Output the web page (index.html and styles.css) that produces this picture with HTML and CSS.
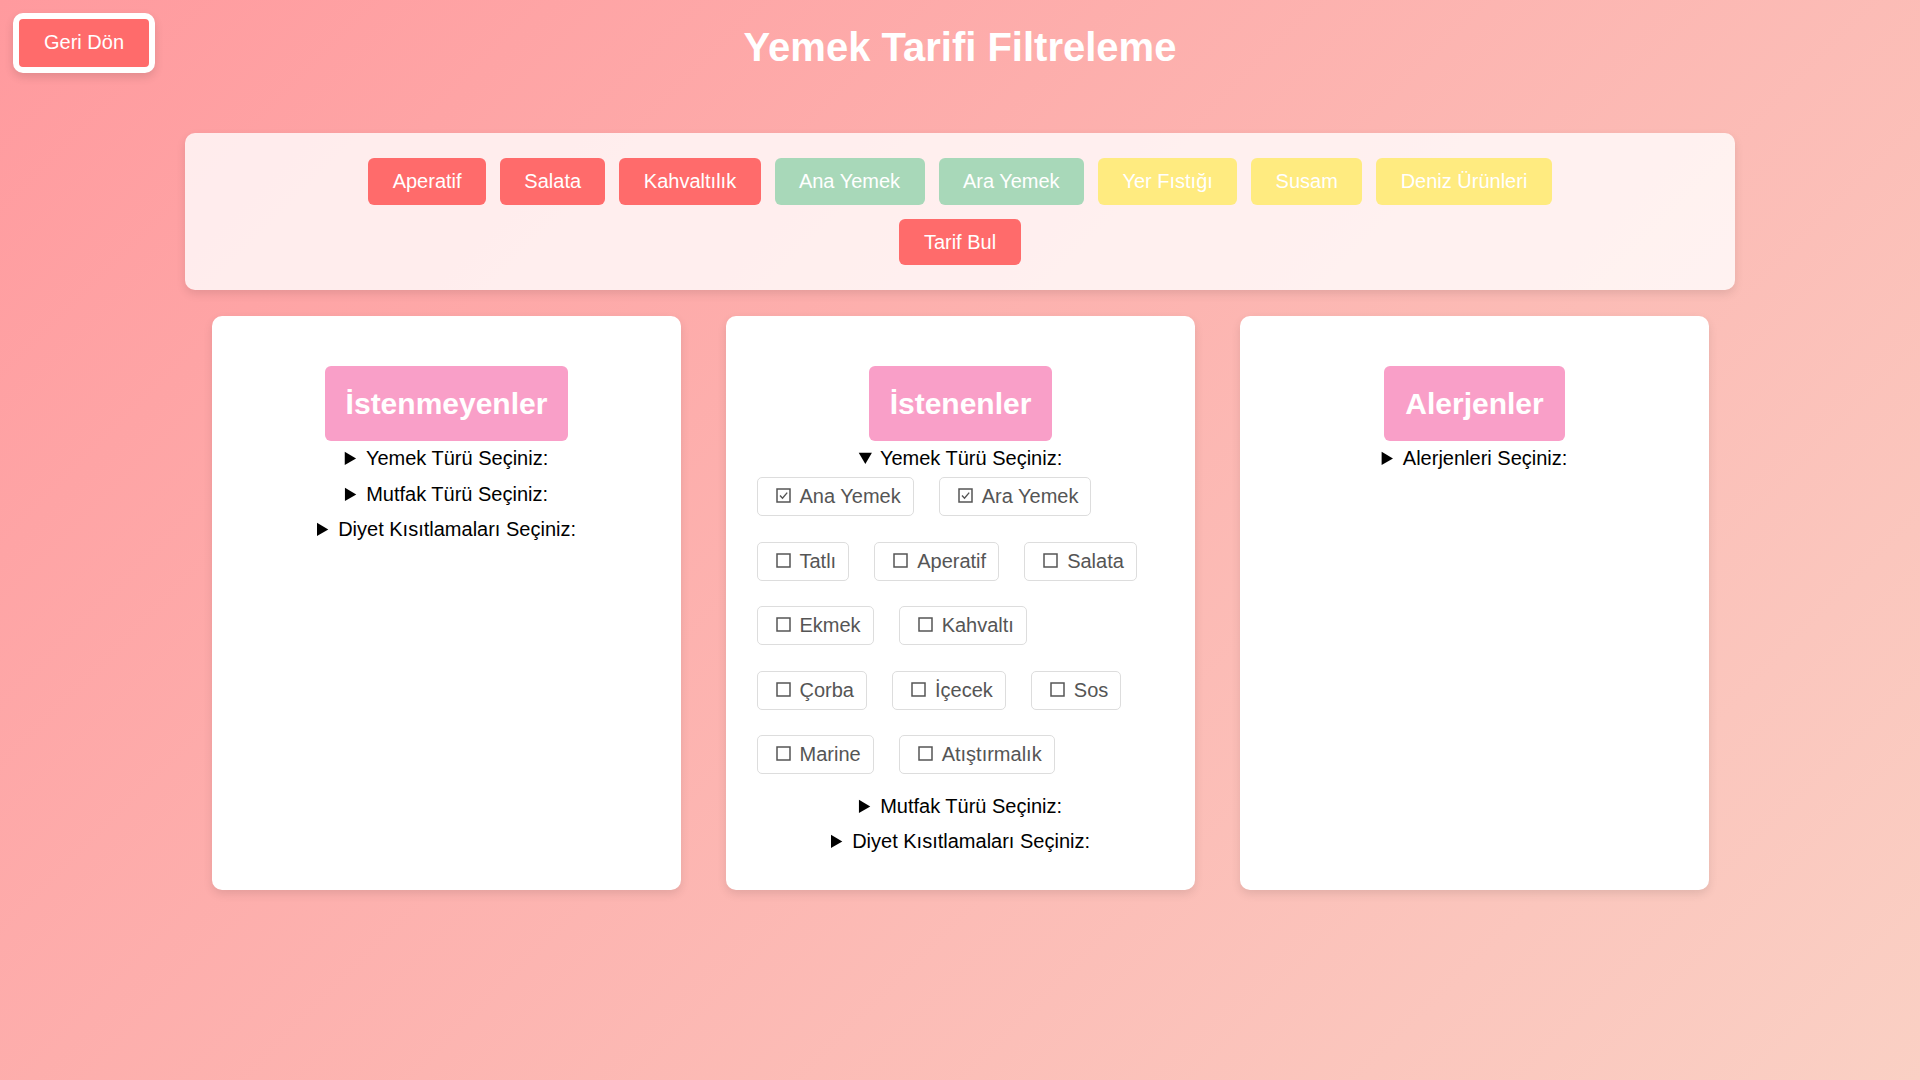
FILE: index.html
```html
<!DOCTYPE html>
<html lang="tr">
<head>
<meta charset="utf-8">
<title>Yemek Tarifi Filtreleme</title>
<link rel="stylesheet" href="styles.css">
</head>
<body>
<header class="header">
  <div class="header-left"><button class="back-btn">Geri Dön</button></div>
  <h1 class="title">Yemek Tarifi Filtreleme</h1>
  <div class="header-right"></div>
</header>

<section class="filter-panel">
  <div class="tag-row">
    <span class="tag tag-red">Aperatif</span>
    <span class="tag tag-red">Salata</span>
    <span class="tag tag-red">Kahvaltılık</span>
    <span class="tag tag-green">Ana Yemek</span>
    <span class="tag tag-green">Ara Yemek</span>
    <span class="tag tag-yellow">Yer Fıstığı</span>
    <span class="tag tag-yellow">Susam</span>
    <span class="tag tag-yellow">Deniz Ürünleri</span>
  </div>
  <div class="find-row"><button class="tag tag-red find-btn">Tarif Bul</button></div>
</section>

<main class="cards">
  <div class="card">
    <h2 class="card-title">İstenmeyenler</h2>
    <details class="group"><summary>Yemek Türü Seçiniz:</summary></details>
    <details class="group"><summary>Mutfak Türü Seçiniz:</summary></details>
    <details class="group"><summary>Diyet Kısıtlamaları Seçiniz:</summary></details>
  </div>

  <div class="card">
    <h2 class="card-title">İstenenler</h2>
    <details class="group" open>
      <summary>Yemek Türü Seçiniz:</summary>
      <div class="options">
        <label class="opt"><svg class="cb" viewBox="0 0 15 15"><rect x="1" y="1" width="13" height="13"/><path d="M4 7.6 L6.5 10.2 L11.2 4.6"/></svg>Ana Yemek</label>
        <label class="opt"><svg class="cb" viewBox="0 0 15 15"><rect x="1" y="1" width="13" height="13"/><path d="M4 7.6 L6.5 10.2 L11.2 4.6"/></svg>Ara Yemek</label>
        <label class="opt"><svg class="cb" viewBox="0 0 15 15"><rect x="1" y="1" width="13" height="13"/></svg>Tatlı</label>
        <label class="opt"><svg class="cb" viewBox="0 0 15 15"><rect x="1" y="1" width="13" height="13"/></svg>Aperatif</label>
        <label class="opt"><svg class="cb" viewBox="0 0 15 15"><rect x="1" y="1" width="13" height="13"/></svg>Salata</label>
        <label class="opt"><svg class="cb" viewBox="0 0 15 15"><rect x="1" y="1" width="13" height="13"/></svg>Ekmek</label>
        <label class="opt"><svg class="cb" viewBox="0 0 15 15"><rect x="1" y="1" width="13" height="13"/></svg>Kahvaltı</label>
        <label class="opt"><svg class="cb" viewBox="0 0 15 15"><rect x="1" y="1" width="13" height="13"/></svg>Çorba</label>
        <label class="opt"><svg class="cb" viewBox="0 0 15 15"><rect x="1" y="1" width="13" height="13"/></svg>İçecek</label>
        <label class="opt"><svg class="cb" viewBox="0 0 15 15"><rect x="1" y="1" width="13" height="13"/></svg>Sos</label>
        <label class="opt"><svg class="cb" viewBox="0 0 15 15"><rect x="1" y="1" width="13" height="13"/></svg>Marine</label>
        <label class="opt"><svg class="cb" viewBox="0 0 15 15"><rect x="1" y="1" width="13" height="13"/></svg>Atıştırmalık</label>
      </div>
    </details>
    <details class="group"><summary>Mutfak Türü Seçiniz:</summary></details>
    <details class="group"><summary>Diyet Kısıtlamaları Seçiniz:</summary></details>
  </div>

  <div class="card">
    <h2 class="card-title">Alerjenler</h2>
    <details class="group"><summary>Alerjenleri Seçiniz:</summary></details>
  </div>
</main>
</body>
</html>
```
FILE: styles.css
```css
* { box-sizing: border-box; }

html, body { height: 100%; }

body {
  margin: 0;
  padding: 13px;
  min-height: 1080px;
  font-family: "Liberation Sans", Arial, sans-serif;
  background: linear-gradient(135deg, #ff9a9e 0%, #fad0c4 100%);
  background-attachment: fixed;
}

.header {
  display: grid;
  grid-template-columns: 1fr auto 1fr;
  align-items: start;
}

.back-btn {
  font-family: "Liberation Sans", Arial, sans-serif;
  font-size: 20px;
  line-height: 23px;
  color: #fff;
  background: #ff6b6b;
  border: 6px solid #fff;
  border-radius: 10px;
  padding: 12px 25px 13px;
  box-shadow: 0 4px 10px rgba(0, 0, 0, 0.12);
  cursor: pointer;
}

.title {
  margin: 11px 0 0;
  font-size: 40px;
  line-height: 46px;
  font-weight: bold;
  color: #fff;
  text-align: center;
}

.filter-panel {
  width: 1550px;
  margin: 60px auto 0;
  padding: 25px;
  background: rgba(255, 255, 255, 0.8);
  border-radius: 10px;
  box-shadow: 0 4px 10px rgba(0, 0, 0, 0.1);
}

.tag-row {
  display: flex;
  justify-content: center;
  flex-wrap: wrap;
  gap: 14px;
}

.find-row {
  display: flex;
  justify-content: center;
  margin-top: 14px;
}

.tag {
  display: inline-block;
  font-family: "Liberation Sans", Arial, sans-serif;
  font-size: 20px;
  line-height: 23px;
  color: #fff;
  padding: 12px 24.4px;
  border: none;
  border-radius: 6px;
}

.find-btn { padding: 12px 25px 11px; }

.tag-red { background: #ff6b6b; }
.tag-green { background: #a8d8b9; }
.tag-yellow { background: #ffeb80; }

.cards {
  display: flex;
  justify-content: center;
  gap: 45px;
  margin-top: 26px;
}

.card {
  width: 469px;
  background: #fff;
  border-radius: 10px;
  padding: 30px 30px 30px 31px;
  text-align: center;
  box-shadow: 0 4px 10px rgba(0, 0, 0, 0.1);
}

.card-title {
  display: inline-block;
  margin: 20px 0 0;
  padding: 20px 21px;
  font-size: 30px;
  line-height: 35px;
  font-weight: bold;
  color: #fff;
  background: #f99fc8;
  border-radius: 6px;
}

.group {
  padding: 6px 0 6.5px;
}

.group summary {
  font-size: 20px;
  line-height: 23px;
  color: #000;
  cursor: pointer;
}

.options {
  display: flex;
  flex-wrap: wrap;
  gap: 25.6px 25px;
  max-width: 396px;
  margin: 7px 0 8px;
  text-align: left;
}

.opt {
  display: inline-flex;
  align-items: center;
  gap: 9px;
  height: 39px;
  padding: 0 12px 0 18px;
  border: 1px solid #ddd;
  border-radius: 5px;
  font-size: 20px;
  line-height: 23px;
  color: #555;
}

.cb {
  width: 15px;
  height: 15px;
  flex: none;
  margin-top: -2px;
}

.cb rect {
  fill: #fff;
  stroke: #555;
  stroke-width: 1.5;
}

.cb path {
  fill: none;
  stroke: #555;
  stroke-width: 1.4;
}
```
